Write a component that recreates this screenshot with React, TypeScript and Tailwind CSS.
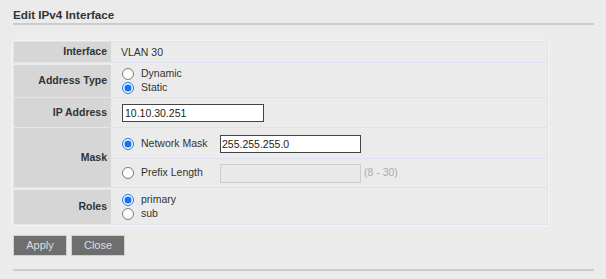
import { type ReactNode } from "react";

const font = { fontFamily: '"Liberation Sans", Arial, sans-serif' };

function Row({
	label,
	children,
	className,
}: {
	label: string;
	children: ReactNode;
	className?: string;
}) {
	return (
		<div className={`flex border-b border-[#dfdff0] last:border-b-0 ${className ?? ""}`}>
			<div className="w-[97px] shrink-0 bg-[#d6d6d6] border-b border-[#e6e6e6] -mb-px flex items-center justify-end pr-[4px] font-bold text-[10.5px] text-[#333]">
				{label}
			</div>
			<div className="flex-1 pl-[10px] flex flex-col justify-center text-[10.5px] text-[#333]">
				{children}
			</div>
		</div>
	);
}

function Radio({ label, checked, name }: { label: string; checked?: boolean; name: string }) {
	return (
		<label className="flex items-center h-[14px]">
			<input
				type="radio"
				name={name}
				defaultChecked={checked}
				className="w-[12px] h-[12px] ml-[1px] mr-[7px] accent-[#1a73e8] m-0"
			/>
			<span>{label}</span>
		</label>
	);
}

export default function App() {
	return (
		<div className="min-h-screen bg-[#ebebeb] px-[13px] pt-[8px]" style={font}>
			<div className="font-bold text-[11.7px] leading-[13px] text-[#333] pb-[2px] border-b-2 border-[#cccccc] mr-[-1px]">
				Edit IPv4 Interface
			</div>

			<div className="mt-[16px] w-[535px] border border-[#e2e2ee] shadow-[0_0_2px_1px_#f6f6f6]">
				<Row label="Interface" className="h-[21px]">
					<span className="pt-px">VLAN 30</span>
				</Row>
				<Row label="Address Type" className="h-[35px] pt-[2px]">
					<Radio name="type" label="Dynamic" />
					<Radio name="type" label="Static" checked />
				</Row>
				<Row label="IP Address" className="h-[30px]">
					<input
						type="text"
						defaultValue="10.10.30.251"
						className="w-[142px] h-[18px] bg-white border border-[#444] px-[2px] text-[10.5px] text-[#222] outline-none ml-px"
					/>
				</Row>
				<div className="flex h-[60px] border-b border-[#dfdff0]">
					<div className="w-[97px] shrink-0 bg-[#d6d6d6] border-b border-[#e6e6e6] -mb-px flex items-center justify-end pr-[4px] font-bold text-[10.5px] text-[#333]">
						Mask
					</div>
					<div className="flex-1 flex flex-col text-[10.5px] text-[#333]">
						<div className="h-[31px] flex items-center pl-[10px] pt-px border-b border-[#dfdff0]">
							<div className="w-[99px]">
								<Radio name="mask" label="Network Mask" checked />
							</div>
							<input
								type="text"
								defaultValue="255.255.255.0"
								className="w-[141px] h-[18px] bg-white border border-[#444] px-px text-[10.5px] text-[#222] outline-none"
							/>
						</div>
						<div className="flex-1 flex items-center pl-[10px]">
							<div className="w-[99px]">
								<Radio name="mask" label="Prefix Length" />
							</div>
							<input
								type="text"
								disabled
								className="w-[141px] h-[19px] bg-[#e9e9e9] border border-[#cfcfcf] outline-none"
							/>
							<span className="ml-[3px] text-[#aaa]">(8 - 30)</span>
						</div>
					</div>
				</div>
				<Row label="Roles" className="h-[36px] pt-[2px]">
					<Radio name="role" label="primary" checked />
					<Radio name="role" label="sub" />
				</Row>
			</div>

			<div className="flex gap-[4px] mt-[10px]">
				<button className="w-[54px] h-[21px] bg-[#6e6e6e] border border-[#d0d0d0] text-[#dedede] text-[11px]">
					Apply
				</button>
				<button className="w-[54px] h-[21px] bg-[#6e6e6e] border border-[#d0d0d0] text-[#dedede] text-[11px]">
					Close
				</button>
			</div>

			<div className="mt-[13px] border-b-2 border-[#cccccc] mr-[-1px]" />
		</div>
	);
}
